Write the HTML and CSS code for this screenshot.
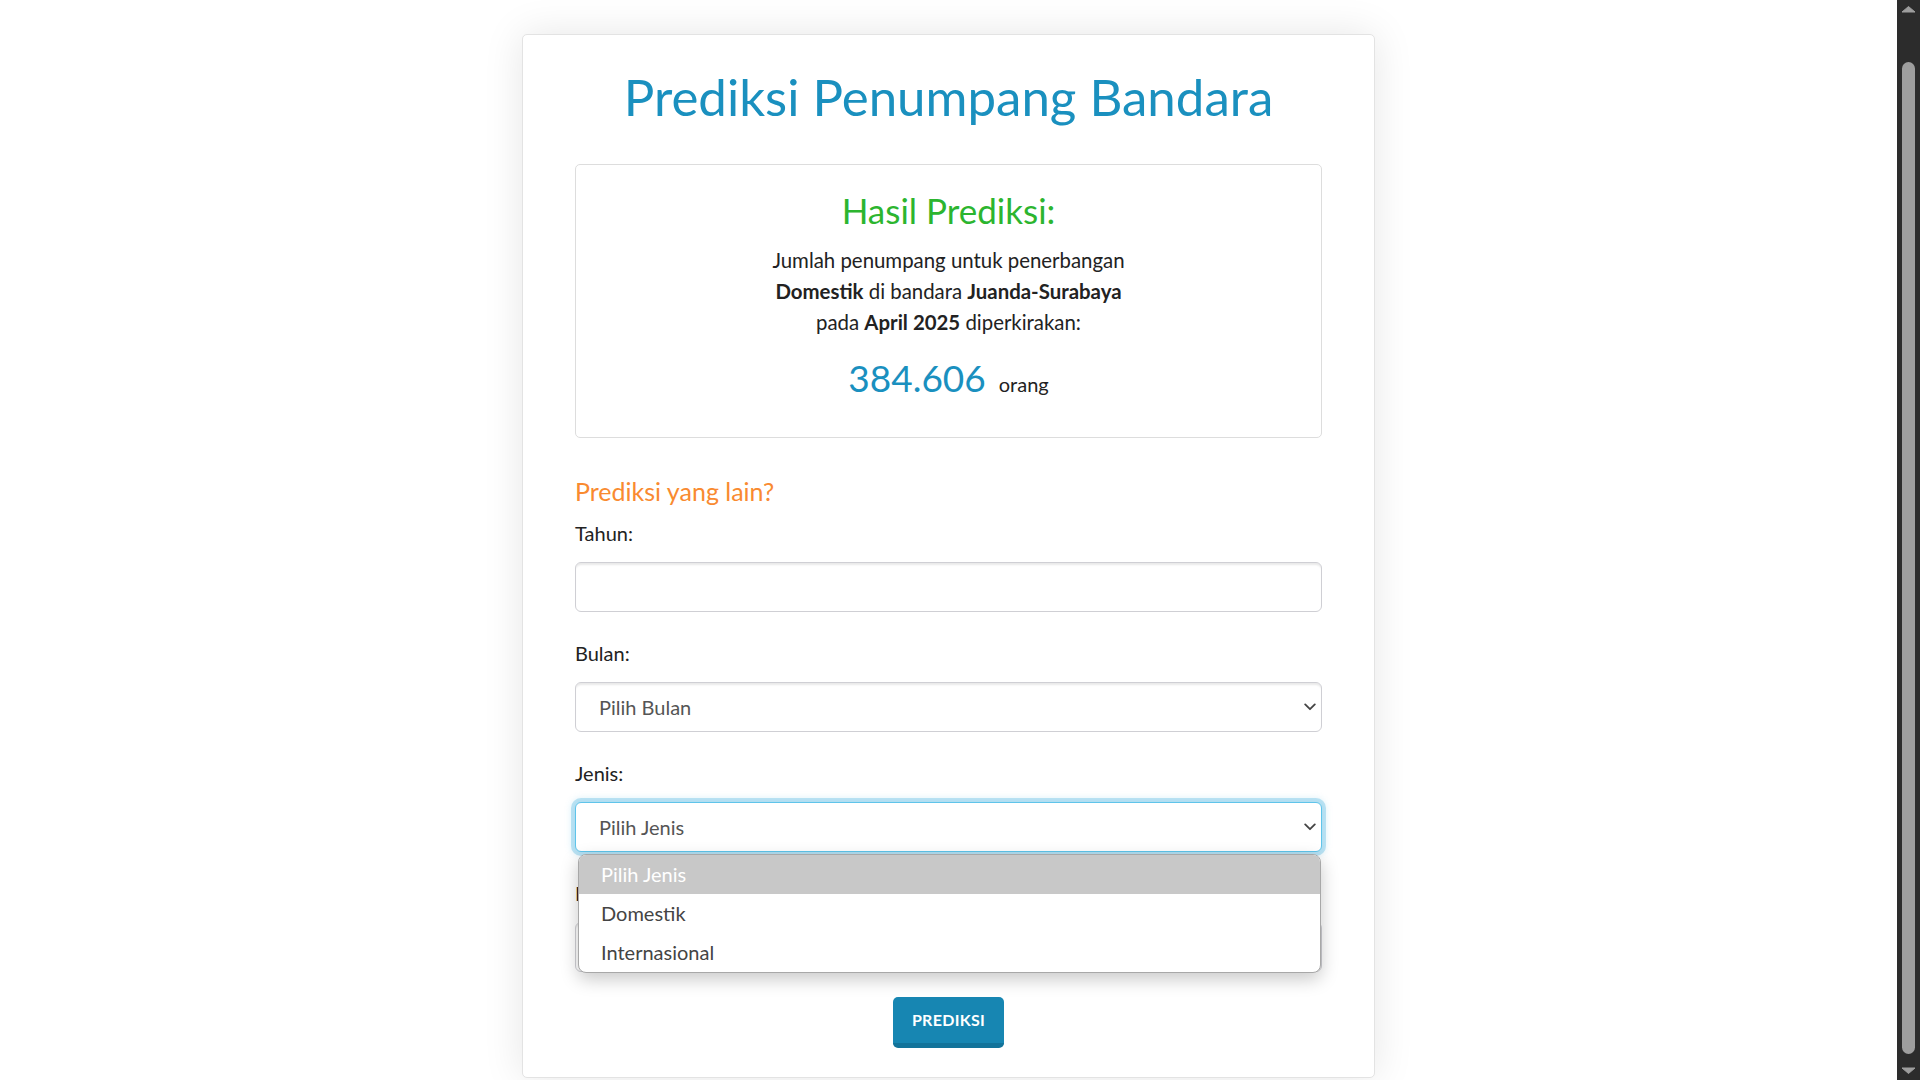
FILE: index.html
```html
<!DOCTYPE html>
<html lang="id">
<head>
<meta charset="utf-8">
<title>Prediksi Penumpang Bandara</title>
<link rel="stylesheet" href="styles.css">
</head>
<body>
<div class="page">
  <main class="card">
    <h1 class="title">Prediksi Penumpang Bandara</h1>

    <section class="result">
      <h2 class="result-title">Hasil Prediksi:</h2>
      <p class="result-text">Jumlah penumpang untuk penerbangan<br><b>Domestik</b> di bandara <b>Juanda-Surabaya</b><br>pada <b>April 2025</b> diperkirakan:</p>
      <p class="result-value"><span class="number">384.606</span><span class="unit">orang</span></p>
    </section>

    <form class="form" onsubmit="return false">
      <h3 class="form-title">Prediksi yang lain?</h3>

      <div class="group">
        <label class="label" for="tahun">Tahun:</label>
        <input class="control" id="tahun" type="text">
      </div>

      <div class="group">
        <label class="label" for="bulan">Bulan:</label>
        <div class="select-wrap">
          <select class="control select" id="bulan">
            <option>Pilih Bulan</option>
          </select>
          <svg class="chevron" width="12" height="8" viewBox="0 0 12 8"><path d="M1.2 1.4 L6 6.2 L10.8 1.4" fill="none" stroke="#444" stroke-width="1.8" stroke-linecap="round" stroke-linejoin="round"/></svg>
        </div>
      </div>

      <div class="group">
        <label class="label" for="jenis">Jenis:</label>
        <div class="select-wrap">
          <select class="control select is-focused" id="jenis">
            <option>Pilih Jenis</option>
          </select>
          <svg class="chevron" width="12" height="8" viewBox="0 0 12 8"><path d="M1.2 1.4 L6 6.2 L10.8 1.4" fill="none" stroke="#444" stroke-width="1.8" stroke-linecap="round" stroke-linejoin="round"/></svg>
          <ul class="dropdown">
            <li class="option is-active">Pilih Jenis</li>
            <li class="option">Domestik</li>
            <li class="option">Internasional</li>
          </ul>
        </div>
      </div>

      <div class="group">
        <label class="label" for="bandara">Bandara:</label>
        <div class="select-wrap">
          <select class="control select" id="bandara">
            <option>Pilih Bandara</option>
          </select>
          <svg class="chevron" width="12" height="8" viewBox="0 0 12 8"><path d="M1.2 1.4 L6 6.2 L10.8 1.4" fill="none" stroke="#444" stroke-width="1.8" stroke-linecap="round" stroke-linejoin="round"/></svg>
        </div>
      </div>

      <div class="actions">
        <button class="btn" type="submit">PREDIKSI</button>
      </div>
    </form>
  </main>
</div>

<div class="scrollbar" aria-hidden="true">
  <div class="scroll-btn">
    <svg width="23" height="17" viewBox="0 0 23 17"><path d="M5 12 L11.5 6.5 L18 12 Z" fill="#9e9e9e" stroke="#9e9e9e" stroke-width="1" stroke-linejoin="round"/></svg>
  </div>
  <div class="scroll-track"><div class="scroll-thumb"></div></div>
  <div class="scroll-btn">
    <svg width="23" height="17" viewBox="0 0 23 17"><path d="M5 5 L11.5 10.5 L18 5 Z" fill="#9e9e9e" stroke="#9e9e9e" stroke-width="1" stroke-linejoin="round"/></svg>
  </div>
</div>
</body>
</html>
```

FILE: styles.css
```css
html {
  background: #ffffff;
}

body {
  margin: 0;
  height: 100vh;
  overflow: hidden;
  display: flex;
  font-family: Lato, "Open Sans", "Liberation Sans", sans-serif;
  color: #222222;
}

.page {
  flex: 1;
  min-width: 0;
  height: 100vh;
  overflow: hidden;
}

/* fake browser scrollbar */
.scrollbar {
  flex: 0 0 23px;
  height: 100vh;
  display: flex;
  flex-direction: column;
  background: #2c2c2c;
}

.scroll-btn {
  flex: 0 0 17px;
  display: flex;
}

.scroll-track {
  flex: 1;
  display: flex;
  justify-content: center;
  padding: 45px 0 9px;
}

.scroll-thumb {
  width: 13px;
  background: #9e9e9e;
  border-radius: 7px;
}

.card {
  box-sizing: border-box;
  width: 853px;
  margin: 34px auto 0;
  padding: 33px 52px 29px;
  background: #ffffff;
  border: 1px solid #e3e3e3;
  border-radius: 5px;
  box-shadow: 0 0 40px rgba(0, 0, 0, 0.1);
}

.title {
  margin: 0 0 38px;
  font-size: 51px;
  line-height: 58px;
  font-weight: 400;
  color: #1a90bf;
  text-align: center;
}

.result {
  padding: 25px 20px 34px;
  border: 1px solid #dddddd;
  border-radius: 5px;
  text-align: center;
}

.result-title {
  margin: 0 0 15px;
  font-size: 35px;
  line-height: 40px;
  font-weight: 400;
  color: #2cb52f;
}

.result-text {
  margin: 0 0 15px;
  font-size: 20.4px;
  line-height: 31px;
  color: #222222;
}

.result-text b {
  font-weight: 700;
}

.result-value {
  margin: 0;
  font-size: 37px;
  line-height: 50px;
}

.number {
  color: #1a90bf;
}

.unit {
  margin-left: 13px;
  font-size: 20px;
  line-height: 1;
  color: #222222;
}

.form {
  margin-top: 38px;
}

.form-title {
  margin: 0 0 15px;
  font-size: 25px;
  line-height: 30px;
  font-weight: 400;
  color: #f98a30;
}

.group {
  display: flex;
  flex-direction: column;
  gap: 17px;
}

.group + .group {
  margin-top: 29px;
}

.label {
  font-size: 20px;
  line-height: 24px;
  color: #222222;
}

.select-wrap {
  position: relative;
}

.control {
  box-sizing: border-box;
  display: block;
  width: 100%;
  height: 50px;
  margin: 0;
  padding: 0 40px 0 23px;
  font-family: inherit;
  font-size: 20px;
  color: #555555;
  background: #ffffff;
  border: 1px solid #cfcfd4;
  border-radius: 6px;
  box-shadow: inset 0 3px 2px -1px rgba(0, 0, 0, 0.09);
  outline: none;
}

.select {
  appearance: none;
  -webkit-appearance: none;
}

.is-focused {
  border-color: #5fc4ea;
  box-shadow: 0 0 0 4px rgba(120, 198, 230, 0.45), 0 0 6px 4px rgba(120, 198, 230, 0.25);
}

.chevron {
  position: absolute;
  right: 6px;
  top: 21px;
  pointer-events: none;
}

.dropdown {
  position: absolute;
  top: 52px;
  left: 3px;
  right: 1px;
  z-index: 10;
  margin: 0;
  padding: 0;
  list-style: none;
  background: #ffffff;
  border: 1px solid #a8a8a8;
  border-radius: 8px;
  overflow: hidden;
  box-shadow: 0 6px 18px rgba(0, 0, 0, 0.22);
}

.option {
  height: 39px;
  line-height: 39px;
  padding-left: 22px;
  font-size: 20px;
  color: #444444;
}

.option.is-active {
  background: #c8c8c8;
  color: #ffffff;
}

.actions {
  display: flex;
  justify-content: center;
  margin-top: 25px;
}

.btn {
  box-sizing: border-box;
  height: 51px;
  padding: 0 19px;
  font-family: inherit;
  font-size: 16px;
  font-weight: 700;
  letter-spacing: 0.3px;
  line-height: 46px;
  color: #ffffff;
  background: #1786b2;
  border: 0;
  border-bottom: 5px solid #12739a;
  border-radius: 5px;
  cursor: pointer;
}
```
